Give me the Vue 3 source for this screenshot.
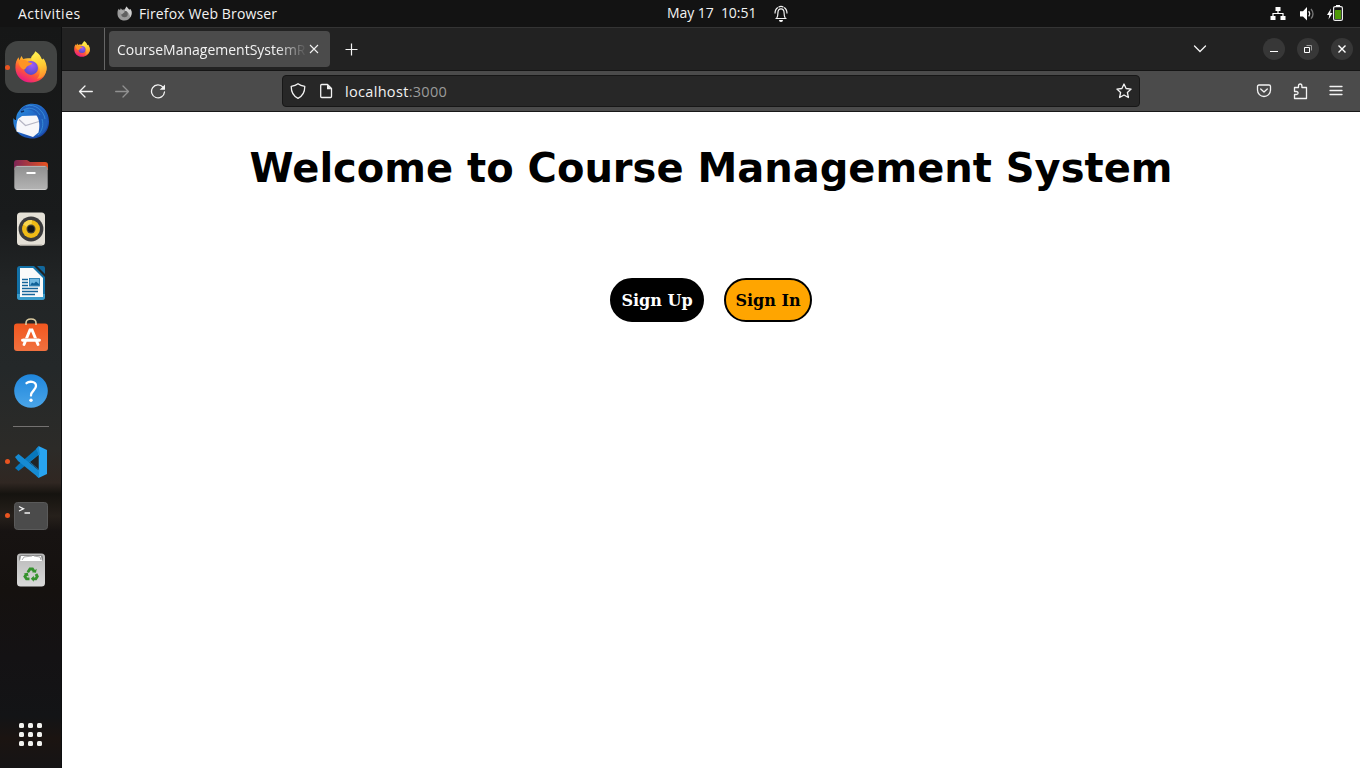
<script setup>
const dots = [0, 1, 2, 3, 4, 5, 6, 7, 8]
</script>

<template>
  <div class="desktop">
    <svg class="defs" width="0" height="0" aria-hidden="true">
      <defs>
        <linearGradient id="ffBody" x1="0.85" y1="0.1" x2="0.3" y2="1">
          <stop offset="0" stop-color="#fff44f" /><stop offset="0.35" stop-color="#ffa428" />
          <stop offset="0.62" stop-color="#ff5a36" /><stop offset="1" stop-color="#e8148a" />
        </linearGradient>
        <linearGradient id="ffFlame" x1="0.4" y1="0" x2="0.6" y2="1">
          <stop offset="0" stop-color="#fff251" /><stop offset="0.55" stop-color="#ffc933" /><stop offset="1" stop-color="#ff8a2c" />
        </linearGradient>
        <radialGradient id="ffGlobe" cx="0.55" cy="0.3" r="0.75">
          <stop offset="0" stop-color="#a05cf8" /><stop offset="1" stop-color="#5348c4" />
        </radialGradient>
        <linearGradient id="tbBlue" x1="0" y1="0" x2="1" y2="1">
          <stop offset="0" stop-color="#2f9be8" /><stop offset="0.5" stop-color="#2064c4" /><stop offset="1" stop-color="#17399a" />
        </linearGradient>
        <linearGradient id="folderBack"><stop offset="0" stop-color="#7d2556" /><stop offset="1" stop-color="#ea5420" /></linearGradient>
        <linearGradient id="greyFront" x1="0" y1="0" x2="0" y2="1"><stop offset="0" stop-color="#8f8f8f" /><stop offset="1" stop-color="#b4b4b4" /></linearGradient>
        <linearGradient id="bag" x1="0" y1="0" x2="0" y2="1"><stop offset="0" stop-color="#f1571f" /><stop offset="1" stop-color="#f1713f" /></linearGradient>
        <linearGradient id="help" x1="0" y1="0" x2="0" y2="1"><stop offset="0" stop-color="#1f86dc" /><stop offset="1" stop-color="#4aa5e8" /></linearGradient>
        <linearGradient id="bin" x1="0" y1="0" x2="0" y2="1"><stop offset="0" stop-color="#b9b9b9" /><stop offset="1" stop-color="#dadada" /></linearGradient>
        <symbol id="firefox" viewBox="0 0 32 32">
          <path d="M16 31.5C7 31.5.4 25 .4 16.4.4 12 1.500 8.500 3.600 6.300L4.300 9.200 6.500 4.900 8.200 7.900C10 7.300 12 7 14.200 7.200L25 7C29.500 9.500 32 14 31.500 18.500 30.500 26.500 24 31.500 16 31.500Z" fill="url(#ffBody)" />
          <path d="M20.200.2C24.500 2.500 26 5.800 27 8.700L28.500 7.500C31 11 32.200 15 31.200 20 30 25 26 27.500 22 27.800 26 24 25.500 17 22.500 13 18 11.500 15.200 8.500 16.400 5.800 17.500 3.500 19.500 3 20.200.2Z" fill="url(#ffFlame)" />
          <circle cx="16" cy="16.900" r="7" fill="url(#ffGlobe)" />
          <path d="M3.500 11C6.500 7.700 11 8.500 13.500 11.300L17 12C17.500 13.700 13.500 14.200 12 15.500 11 16.300 11 18 9 18.500 6.500 18 4 15 3.500 11Z" fill="#ff9425" />
        </symbol>
      </defs>
    </svg>

    <header class="topbar">
      <span class="activities">Activities</span>
      <svg class="app-logo" width="15" height="15" viewBox="0 0 32 32">
        <path d="M16 31C7 31 1 25 1 16 1 11 2 8 4 6L6 9 8 5 11 8 17 7 20 1 26 8 29 7C32 11 32 16 30 22 27 28 22 31 16 31Z" fill="#999" />
        <path d="M20 1 26 8 29 7C32 12 32 19 28 24 28 18 24 12 16 10Z" fill="#d0d0d0" />
        <circle cx="16" cy="17" r="7" fill="#606060" />
        <path d="M4 10C8 8 13 9 17 12L10 18Z" fill="#aaa" />
      </svg>
      <span class="app-name">Firefox Web Browser</span>
      <span class="clock">May 17&nbsp; 10:51</span>
      <svg class="bell" width="16" height="18" viewBox="0 0 16 18" fill="none" stroke="#f2f2f2" stroke-width="1.200">
        <path d="M2.500 13.500h11M3.700 13c1-1.200 1.200-2.600 1.200-5C4.900 5.500 6 3.800 8 3.800s3.100 1.700 3.100 4.200c0 2.400.2 3.800 1.200 5M4.900 2.500C3 3.600 2 5.600 2 8.500M11.100 2.500C13 3.600 14 5.600 14 8.500M5.500 2.200Q8 .5 10.500 2.200" />
        <path d="M6 15h4a2 2 0 0 1-4 0Z" fill="#fff" stroke="none" />
      </svg>
      <div class="status">
        <svg width="16" height="16" viewBox="0 0 16 16"><path d="M5.500 1h5v4h-5zM.500 10h5v4h-5zM10.500 10h5v4h-5z" fill="#fff" /><path d="M8 5v2.500M3 10V7.500h10V10" fill="none" stroke="#fff" stroke-width="1.200" /></svg>
        <svg width="16" height="16" viewBox="0 0 16 16"><path d="M1 5.200h3L8 1v13.500L4 10.500H1z" fill="#fff" /><path d="M9.700 5.200q2 2.600 0 5.200" fill="none" stroke="#eee" stroke-width="1.200" /><path d="M12 3q4 4.900 0 9.700" fill="none" stroke="#777" stroke-width="1.300" /></svg>
        <svg width="17" height="18" viewBox="0 0 17 18"><path d="M4 3.500 0 10h2.300L1.500 14.500 5.500 8H3.200z" fill="#fff" /><rect x="6.600" y="1.600" width="8.800" height="13.800" rx="1.500" fill="none" stroke="#eee" stroke-width="1.200" /><path d="M9 0h4v1.500H9z" fill="#fff" /><path d="M8 5h6v9H8z" fill="#4e9a06" /></svg>
      </div>
    </header>

    <div class="workspace">
      <nav class="dock">
        <div class="app active running"><svg width="32" height="32" viewBox="0 0 32 32"><use href="#firefox" /></svg></div>
        <div class="app"><svg width="36" height="36" viewBox="0 0 36 36">
          <path d="M6 8C11 0 21-1 28 3 36 8 38 20 34 27 30 34 22 37 15 35 5 34-1 24 .500 15c.700 1.500 1.500 2 2.500 2C3 13 4 10 6 8Z" fill="url(#tbBlue)" />
          <path d="M7 9C12 4 20 6 24 12 28 18 28 28 20 34 35 33 39 17 30 7 23-1 10 0 7 9Z" fill="#205fbc" />
          <path d="M5 16 9 13 23.500 12.500C26.500 16 27 23 25.500 29.500L20 34 3.500 28.500C3 24 3.500 19 5 16Z" fill="#f7f7fa" />
          <path d="m6 16.500 6.500 6L26 18.500" fill="none" stroke="#b6b6c4" stroke-width="1.200" />
          <path d="M9 8C15 3 23 5 27 12M13 3C22 0 31 8 32 16M29 16C31 22 29 28 25 32" fill="none" stroke="#3f9be0" stroke-width="1" opacity=".7" />
          <path d="m8 9 3-1" stroke="#0d2e63" stroke-width="1.500" />
        </svg></div>
        <div class="app"><svg width="34" height="34" viewBox="0 0 34 34">
          <path d="M0 5Q0 2 3 2h10l3 2h15q3 0 3 3v5H0Z" fill="url(#folderBack)" />
          <rect x="0.300" y="8" width="33.400" height="24" rx="3" fill="url(#greyFront)" /><path d="M2.500 8.400h29" stroke="#b9b9b9" />
          <path d="M2.500 31.500h29" stroke="#d0d0d0" /><rect x="12.500" y="14" width="9" height="2" fill="#fff" />
        </svg></div>
        <div class="app"><svg width="34" height="34" viewBox="0 0 34 34">
          <rect x="3" y=".5" width="28" height="33" rx="3.500" fill="#e4e0d6" /><path d="M6 33h22" stroke="#b7b3aa" />
          <circle cx="17" cy="17" r="12.400" fill="#3b3b3d" /><circle cx="17" cy="17" r="9" fill="#f0bb16" /><path d="M9 12.500a9 9 0 0 1 9-4.500L17 17z" fill="#f9d64d" />
          <circle cx="17" cy="17" r="4.500" fill="#454538" /><circle cx="17" cy="17" r="3.300" fill="#151515" />
        </svg></div>
        <div class="app"><svg width="34" height="34" viewBox="0 0 34 34">
          <path d="M6 0h14l11 11v20q0 3-3 3H6q-3 0-3-3V3Q3 0 6 0Z" fill="#1270a6" /><path d="M3 28h28v3q0 3-3 3H6q-3 0-3-3Z" fill="#3a9bca" />
          <path d="M6 2h13l10 10v19H6z" fill="#fafafa" /><path d="M23 0h6q2 0 2 2v6z" fill="#12679b" />
          <path d="M8 13.500h6M8 16.500h6M8 19.500h6M8 22.500h16M8 25.500h16M8 28.500h13" stroke="#16659a" stroke-width="1.300" />
          <rect x="15.500" y="12.500" width="10" height="7.500" fill="#72b8e0" stroke="#1671a8" stroke-width=".8" /><path d="m16 19.500 2-3 2 1 2-2 3 2.500v1.500z" fill="#126298" />
        </svg></div>
        <div class="app"><svg class="store" width="34" height="36" viewBox="0 0 34 36">
          <rect y="5.500" width="34" height="27.500" rx="3" fill="url(#bag)" />
          <path d="M12 7V5q0-4 5-4t5 4v2" fill="none" stroke="#dbcaa0" stroke-width="1.600" />
          <path d="m10 26.500 6-14.500h2l6 14.500M8.500 22.300h17" fill="none" stroke="#fff" stroke-width="2.900" stroke-linecap="round" /><path d="M9 20.500h16" stroke="#efb6a0" stroke-width=".8" />
        </svg></div>
        <div class="app"><svg width="34" height="34" viewBox="0 0 34 34">
          <circle cx="17" cy="17" r="16.800" fill="url(#help)" /><path d="M12.500 9.200C15 7 22 7 22 12c0 4-5 4.800-5 9.500" fill="none" stroke="#fff" stroke-width="2.300" stroke-linecap="round" /><circle cx="17" cy="26.300" r="1.700" fill="#fff" />
        </svg></div>
        <div class="separator"></div>
        <div class="app running"><svg width="32" height="32" viewBox="0 0 32 32">
          <path d="M23.500 0 3.500 17.500 0 21 3.500 24 24 8V0Z" fill="#0877bc" transform="translate(0 1)" />
          <path d="M0 11 3.500 8 24 24.500V32L3 15Z" fill="#168bd3" /><path d="M23.500 0 32 4v24l-8.500 4z" fill="#28a4f1" /><path d="M23 9v14l-9-7zM23.500 0 21 3l3 6h1zM23.500 32l-2-2 3-7z" fill="#168bd3" /><path d="M23.500 9v14L15 16z" fill="#202426" />
        </svg></div>
        <div class="app running"><svg width="34" height="30" viewBox="0 0 34 30">
          <rect x=".5" y="1.500" width="33" height="27" rx="3" fill="#4b4b4b" stroke="#5a5a5a" /><path d="m5 5.500 4.500 2.300L5 10M10.500 12H16" fill="none" stroke="#f4f4f4" stroke-width="1.300" />
        </svg></div>
        <div class="app"><svg width="34" height="34" viewBox="0 0 34 34">
          <rect x="3" y=".5" width="28" height="33" rx="3.500" fill="url(#bin)" /><rect x="5" y="2" width="24" height="6" rx="2" fill="#8b8b8b" />
          <path d="M7 3h20l1 5H6z" fill="#fff" /><path d="m8 7 2-3 8-1M20 3l6 1 1 3" stroke="#aaa" fill="none" />
          <g fill="none" stroke="#35922d" stroke-width="2.800"><path d="m13.800 19.200 2.200-3.200h2.500l1.700 2.600M22 21l1.300 2.500-1.500 2.300H19M15.500 25.800h-3L10.900 23.500l1.500-2.300" /></g>
          <path d="m18 19.300 4 .5.700-4zM19.800 22.800v6l-3-3zM9.600 20.800l4.200-1.300.8 4z" fill="#35922d" />
        </svg></div>
        <div class="apps-grid"><i v-for="d in dots" :key="d"></i></div>
      </nav>

      <main class="browser">
        <div class="tabs">
          <div class="pinned"><svg width="16" height="16"><use href="#firefox" /></svg></div>
          <div class="tab">
            <span class="tab-title">CourseManagementSystemR</span>
            <svg width="10" height="10" viewBox="0 0 10 10"><path d="m1 1 8 8M9 1 1 9" stroke="#f2f2f2" stroke-width="1.100" /></svg>
          </div>
          <svg class="plus" width="13" height="13" viewBox="0 0 13 13"><path d="M6.500 .5v12M.5 6.500h12" stroke="#f5f5f5" stroke-width="1.200" /></svg>
          <svg class="chevron" width="14" height="14" viewBox="0 0 14 14"><path d="m1.500 4 5.500 5.500L12.500 4" fill="none" stroke="#f4f4f4" stroke-width="1.300" stroke-linecap="round" /></svg>
          <div class="window-controls">
            <span><svg width="22" height="22"><path d="M7 13.500h8" stroke="#fff" stroke-width="1" /></svg></span>
            <span><svg width="22" height="22" fill="none"><path d="M9.500 7.500h5v5" stroke="#999" /><path d="M7.500 9.500h5v5h-5z" stroke="#fff" /></svg></span>
            <span><svg width="22" height="22"><path d="m7.500 7.500 7 7m0-7-7 7" stroke="#fff" stroke-width="1.400" /></svg></span>
          </div>
        </div>
        <div class="toolbar">
          <div class="tool"><svg width="16" height="16" viewBox="0 0 16 16"><path d="M14.300 8.500H1.500m5.500-5.500-5.500 5.500 5.500 5.500" /></svg></div>
          <div class="tool dim"><svg width="16" height="16" viewBox="0 0 16 16"><path d="M1.700 8.500h12.800m-5.500-5.500 5.500 5.500-5.500 5.500" /></svg></div>
          <div class="tool"><svg width="16" height="16" viewBox="0 0 16 16"><path d="M14.500 9A6.500 6.500 0 1 1 13 4.200" /><path d="M15 1.500v5.300H9.700z" class="solid" /></svg></div>
          <div class="url">
            <svg width="16" height="16" viewBox="0 0 16 16"><path d="M8 .700C6 2.200 3.500 2.900 1.200 3.300c0 5.200 1.300 9.500 6.800 12 5.500-2.500 6.800-6.800 6.800-12C12.500 2.900 10 2.200 8 .700Z" /></svg>
            <svg class="doc" width="16" height="16" viewBox="0 0 16 16"><path d="M3.700 1.500h5.800l4 4v8q0 1-1 1H3.700q-1 0-1-1v-11q0-1 1-1Z" /><path d="M9 1.500v4.700h4.700z" class="solid" /></svg>
            <span class="address">localhost<span>:3000</span></span>
            <svg class="star" width="16" height="16" viewBox="0 0 16 16"><path d="m8 1 2.100 4.500 5 .6-3.700 3.400 1 5L8 12l-4.400 2.500 1-5L.900 6.100l5-.6Z" /></svg>
          </div>
          <div class="tool first"><svg width="16" height="16" viewBox="0 0 16 16"><path d="M3 2h10q1.500 0 1.500 1.500V7a6.500 6.500 0 0 1-13 0V3.500Q1.500 2 3 2Zm1.700 4L8 9l3.300-3" /></svg></div>
          <div class="tool"><svg width="16" height="17" viewBox="0 0 16 17"><path d="M2.500 15.500v-4h1.800q1.800 0 1.800-1.500T4.300 8.500H2.500v-4h4V3q0-2 1.700-2t1.700 2v1.500h4.600v11z" /></svg></div>
          <div class="tool"><svg width="16" height="16" viewBox="0 0 16 16"><path d="M2 3.500h12M2 7.500h12M2 11.500h12" /></svg></div>
        </div>
        <section class="page">
          <h1>Welcome to Course Management System</h1>
          <div class="actions"><button class="signup">Sign Up</button><button class="signin">Sign In</button></div>
        </section>
      </main>
    </div>
  </div>
</template>

<style>
body { margin: 0; overflow: hidden; }
</style>

<style scoped>
.desktop { width: 1360px; height: 768px; display: flex; flex-direction: column; font-family: "Open Sans", "Noto Sans", sans-serif; color: #f2f2f2; font-size: 14px; overflow: hidden; }
.defs { position: absolute; }
svg { display: block; flex: none; }
.topbar { height: 27px; background: #131313; display: flex; align-items: center; flex: none; line-height: 27px; white-space: nowrap; }
.activities { width: 99px; padding-left: 18px; letter-spacing: .5px; }
.app-logo { margin-right: 7px; }
.app-name { width: 528px; letter-spacing: .12px; }
.clock { width: 106px; height: 27px; line-height: 26px; letter-spacing: -.05px; }
.status { display: flex; align-items: center; gap: 13px; margin-left: auto; margin-right: 15px; }
.status svg:last-child { margin-left: -1px; margin-right: 1px; }
.workspace { display: flex; flex: 1; min-height: 0; }
.dock { box-sizing: border-box; width: 62px; padding: 14px 4px 7px 5px; display: flex; flex-direction: column; gap: 2px; border-right: 1px solid #0d0e0f; background: linear-gradient(#161717 0, #191b1c 26%, #222526 35%, #242829 46%, #2c2b28 57%, #302722 61.500%, #15130f 63%, #26201b 66%, #171312 68%, #15110f 76%, #141214 85%, #131416 93%, #1b1411 96%, #151415 100%); }
.app { width: 52px; height: 52px; display: flex; align-items: center; justify-content: center; position: relative; flex: none; }
.store { margin-bottom: 2px; }
.active { background: #424443; border-radius: 13px; }
.running::before { content: ""; position: absolute; left: 0; top: 23px; width: 5px; height: 5px; border-radius: 50%; background: #e95420; }
.active::before { top: 24px; }
.separator { height: 1px; width: 36px; margin: 7px 8px; background: #747271; flex: none; }
.apps-grid { width: 24px; display: grid; grid-template-columns: repeat(3, 5px); gap: 4px; margin: auto 0 15px 14.400px; }
.apps-grid i { width: 5px; height: 5px; background: #f2f2ef; border-radius: 1.500px; }
.browser { flex: 1; display: flex; flex-direction: column; background: #fff; min-width: 0; }
.tabs { box-sizing: border-box; height: 44px; border-top: 1px solid #343434; border-bottom: 1px solid #151515; background: #222; display: flex; align-items: center; flex: none; }
.pinned { box-sizing: border-box; width: 43px; height: 42px; border-right: 1px solid #666; padding: 13px 0 0 12px; }
.tab { box-sizing: border-box; width: 221px; height: 36px; margin-left: 4px; border-radius: 4px; background: #4b4b4b; padding: 0 11px 0 8px; display: flex; align-items: center; justify-content: space-between; }
.tab-title { width: 192px; white-space: nowrap; line-height: 34px; padding-top: 2px; mask-image: linear-gradient(to right, #000 160px, transparent 190px); }
.plus { margin-left: 15px; margin-top: 1px; }
.chevron { margin-left: auto; margin-right: 56px; }
.window-controls { display: flex; gap: 12px; padding-right: 7px; }
.window-controls span { width: 22px; height: 22px; border-radius: 50%; background: #373737; }
.toolbar { box-sizing: border-box; height: 41px; background: #4b4b4b; border-bottom: 1px solid #171717; display: flex; align-items: center; flex: none; padding: 0 6px; }
.toolbar svg { fill: none; stroke: #f3f3f3; stroke-width: 1.300; stroke-linejoin: round; stroke-linecap: round; }
.toolbar .solid { fill: #f3f3f3; stroke: none; }
.tool { width: 36px; display: flex; justify-content: center; }
.dim { opacity: .42; }
.url { box-sizing: border-box; width: 858px; height: 32px; margin-left: 106px; border: 1px solid #171717; border-radius: 4px; background: #272727; display: flex; align-items: center; padding: 0 7px; }
.doc { margin-left: 12px; }
.address { margin-left: 11px; line-height: 28px; padding-top: 2px; font-size: 14.500px; letter-spacing: .32px; }
.address span { color: #9b9b9b; }
.star { margin-left: auto; }
.first { margin-left: auto; }
.page { flex: 1; color: #000; }
h1 { margin: 28px 0 0; text-align: center; font: bold 40px/56px "DejaVu Sans", sans-serif; white-space: nowrap; }
.actions { display: flex; justify-content: center; gap: 20px; margin-top: 82px; }
button { box-sizing: border-box; height: 44px; padding: 0; border: 2px solid #000; border-radius: 22px; font: bold 16px "DejaVu Serif", serif; }
.signup { width: 94px; color: #fff; background: #000; }
.signin { width: 88px; color: #000; background: orange; }
</style>
